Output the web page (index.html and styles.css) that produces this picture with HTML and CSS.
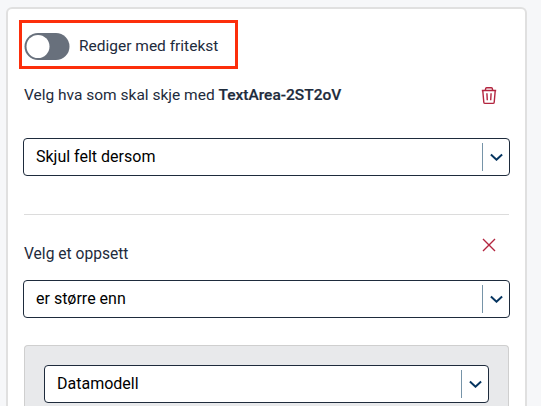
FILE: index.html
```
<!DOCTYPE html>
<html lang="nb">
<head>
<meta charset="utf-8">
<title>Dynamikk</title>
<link rel="stylesheet" href="styles.css">
</head>
<body>
<main class="card">
  <div class="mode">
    <svg class="switch" viewBox="0 0 46 27"><rect x="0.5" width="45" height="27" rx="13.5" fill="#68707c"/><circle cx="14" cy="13.5" r="11.5" fill="#fff"/></svg>
    <span class="mode-label">Rediger med fritekst</span>
  </div>
  <div class="heading">
    <span class="heading-text">Velg hva som skal skje med <b>TextArea-2ST2oV</b></span>
    <svg class="icon trash" viewBox="0 0 16 20" fill="none" stroke="#b3253f" stroke-width="1.4">
      <path d="M0.8 4.5H15.2M4.2 4.5L4.8 2.3Q5 1.7 5.8 1.7H10.2Q11 1.7 11.2 2.3L11.8 4.5M1.8 5L2.8 16.2Q2.9 17.4 4.1 17.4H11.9Q13.1 17.4 13.2 16.2L14.2 5M5.9 7.3L6.3 14.3M10.1 7.3L9.7 14.3"/>
    </svg>
  </div>
  <div class="select">
    <span class="value">Skjul felt dersom</span>
    <span class="arrow"><svg width="14" height="8" viewBox="0 0 14 8"><path d="M0.9 1.5L6.5 6.7L12.1 1.5"/></svg></span>
  </div>
  <hr class="rule">
  <div class="condition">
    <span class="condition-text">Velg et oppsett</span>
    <svg class="icon close" viewBox="0 0 14 14" fill="none" stroke="#b3253f" stroke-width="1.4"><path d="M1 1L13 13M13 1L1 13"/></svg>
  </div>
  <div class="select">
    <span class="value">er større enn</span>
    <span class="arrow"><svg width="14" height="8" viewBox="0 0 14 8"><path d="M0.9 1.5L6.5 6.7L12.1 1.5"/></svg></span>
  </div>
  <section class="group">
    <div class="select">
      <span class="value">Datamodell</span>
      <span class="arrow"><svg width="14" height="8" viewBox="0 0 14 8"><path d="M0.9 1.5L6.5 6.7L12.1 1.5"/></svg></span>
    </div>
  </section>
</main>
</body>
</html>
```
FILE: styles.css
```
* { box-sizing: border-box; }
html { overflow: hidden; }
body {
  margin: 0;
  padding: 7px 0 0 6px;
  height: 406px;
  overflow: hidden;
  background: #f6f7f9;
  color: #1e2b3c;
  font: 16px/20px Roboto, sans-serif;
}
.card {
  width: 521px;
  height: 399px;
  padding: 11px 15px 0;
  background: #fff;
  border: 2px solid #e0e0e0;
  border-bottom: 0;
  border-radius: 6px 6px 0 0;
}
.mode {
  display: flex;
  align-items: center;
  width: 219px;
  height: 49px;
  margin-left: -4px;
  padding: 3px 0 0 2px;
  border: 3px solid #fc2e0b;
}
.switch {
  flex: none;
  width: 46px;
  height: 27px;
}
.mode-label {
  margin-left: 9px;
  font-size: 15.5px;
}
.heading {
  display: flex;
  justify-content: space-between;
  height: 69px;
  padding: 16px 13px 0 1px;
}
.heading-text, .condition-text { font-size: 15.6px; white-space: nowrap; }
.heading-text { font-size: 15.5px; }
.heading b { font-weight: 500; -webkit-text-stroke: 0.2px #1e2b3c; }
.icon { flex: none; display: block; }
.trash { width: 16px; height: 20px; margin-top: 1px; }
.select {
  display: flex;
  align-items: center;
  justify-content: space-between;
  height: 38px;
  padding-left: 12px;
  background: #fff;
  border: 1px solid #1e2b3c;
  border-radius: 4px;
  color: #000;
}
.value { font-size: 16px; }
.arrow {
  display: flex;
  align-items: center;
  width: 27px;
  height: 28px;
  padding-left: 7px;
  border-left: 1px solid #7694a8;
}
.arrow path { fill: none; stroke: #063560; stroke-width: 2; }
.rule {
  height: 1px;
  margin: 38px 1px 0;
  border: 0;
  background: #dcdcdc;
}
.condition {
  display: flex;
  justify-content: space-between;
  height: 65px;
  padding: 29px 14px 0 1px;
}
.close { width: 14px; height: 14px; margin-top: -6px; }
.group {
  height: 61px;
  margin: 27px 1px 0;
  padding: 19px 19px 0;
  background: #e8e9eb;
  border: 1px solid #cfcfcf;
  border-bottom: 0;
  border-radius: 4px 4px 0 0;
}
```
